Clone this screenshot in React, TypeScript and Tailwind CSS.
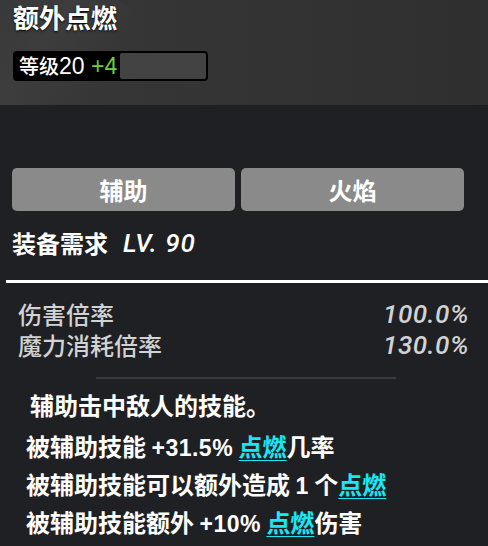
import React from "react";

const F = { fontFamily: '"Noto Sans CJK SC", "Noto Sans", sans-serif' };
const N = { fontFamily: '"Liberation Sans", Arial, "Noto Sans CJK SC", sans-serif' };
const R = { fontFamily: 'Roboto, "Liberation Sans", sans-serif' };

function Kw({ children }: { children: React.ReactNode }) {
  return <span className="text-[#17e8f5] underline decoration-1 underline-offset-[4px]">{children}</span>;
}

function Num({ children }: { children: React.ReactNode }) {
  return <span className="text-[23px] tracking-[0.5px]" style={N}>{children}</span>;
}

export default function App() {
  return (
    <div className="w-[488px] h-[546px] bg-[#1f2024] overflow-hidden text-white" style={F}>
      <div className="relative h-[105px] bg-gradient-to-r from-[#383838] to-[#2f2f2f] overflow-hidden">
        <div className="absolute -left-[40px] -top-[40px] w-[140px] h-[200px] rotate-[35deg] bg-gradient-to-r from-transparent via-[#3f3f3f] to-transparent opacity-70" />
        <div className="relative px-[13px]">
          <div className="text-[26px] font-bold leading-[34px] [text-shadow:0_1px_2px_#000]">额外点燃</div>
          <div className="mt-[17px] w-[195px] h-[30px] bg-black rounded-[4px] flex items-center pl-[6px] pr-[2px] gap-[3px]">
            <span className="text-[20px] leading-none whitespace-nowrap font-medium">
              等级<span className="text-[23px] font-normal" style={N}>20 <span className="text-[#6fce3a]">+4</span></span>
            </span>
            <div className="flex-1 h-[26px] bg-[#434343] rounded-[2px]" />
          </div>
        </div>
      </div>
      <div className="px-[12px] pt-[63px]">
        <div className="flex gap-[6px] w-[452px]">
          <div className="flex-1 h-[43px] bg-[#8a8a8a] rounded-[5px] flex items-center justify-center text-[24px] font-bold">辅助</div>
          <div className="flex-1 h-[43px] bg-[#8a8a8a] rounded-[5px] flex items-center justify-center text-[24px] font-bold">火焰</div>
        </div>
        <div className="mt-[17px] h-[30px] text-[24px] font-bold leading-[30px] flex items-center">
          <span>装备需求</span>
          <span className="ml-[15px] italic font-medium text-[26px] tracking-[1px]" style={R}>LV. 90</span>
        </div>
      </div>
      <div className="ml-[6px] mt-[22px] h-[3px] bg-white" />
      <div className="pl-[18px] pr-[19px] pt-[15px] text-[#d2d2d2] text-[24px] font-medium">
        <div className="flex justify-between items-center h-[31px] leading-none">
          <span>伤害倍率</span>
          <span className="italic text-[26px] tracking-[0.5px]" style={R}>100.0%</span>
        </div>
        <div className="flex justify-between items-center h-[31px] leading-none">
          <span>魔力消耗倍率</span>
          <span className="italic text-[26px] tracking-[0.5px]" style={R}>130.0%</span>
        </div>
      </div>
      <div className="ml-[96px] mt-[17px] w-[300px] h-[2px] bg-[#3a3b3f]" />
      <div className="pl-[30px] mt-[12px] h-[28px] text-[24px] font-bold leading-[28px]">辅助击中敌人的技能。</div>
      <div className="pl-[26px] mt-[8px] text-[24px] font-bold leading-[38px] whitespace-nowrap">
        <div className="h-[38px]">被辅助技能 <Num>+31.5%</Num> <Kw>点燃</Kw>几率</div>
        <div className="h-[38px]">被辅助技能可以额外造成 <Num>1</Num> 个<Kw>点燃</Kw></div>
        <div className="h-[38px]">被辅助技能额外 <Num>+10%</Num> <Kw>点燃</Kw>伤害</div>
      </div>
    </div>
  );
}
